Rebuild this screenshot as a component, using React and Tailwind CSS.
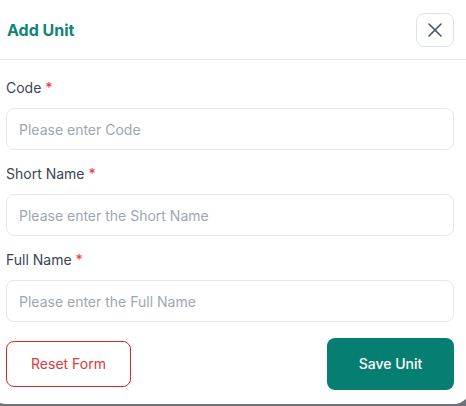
import React, { useState } from 'react';
import { X } from 'lucide-react';

const Field = ({ label, placeholder, value, onChange }) => (
  <div className="flex flex-col">
    <label className="mb-2.5 text-sm leading-5 text-[#3a4557]">
      {label} <span className="font-medium text-[#ef4444]">*</span>
    </label>
    <input
      value={value}
      onChange={onChange}
      placeholder={placeholder}
      className="h-[42px] w-full rounded-lg border border-[#e2e8f0] bg-white px-3 text-sm text-gray-800 placeholder:text-[#a0a6b1] outline-none"
    />
  </div>
);

const App = () => {
  const [form, setForm] = useState({ code: '', shortName: '', fullName: '' });

  const update = key => e => setForm(prev => ({ ...prev, [key]: e.target.value }));
  const reset = () => setForm({ code: '', shortName: '', fullName: '' });

  return (
    <div className="h-[406px] w-full overflow-hidden bg-[#6f727a] font-['Inter',sans-serif]">
      <div className="-ml-[10px] h-[404px] w-[480px] rounded-b-2xl bg-white">
        <div className="flex h-[60px] items-center justify-between border-b border-[#e5e7eb] pl-[17px] pr-4">
          <h2 className="text-base font-bold text-[#0e8577]">Add Unit</h2>
          <button className="flex h-[34px] w-[38px] items-center justify-center rounded-lg border border-[#dde3ee] text-[#4b5563]">
            <X size={24} strokeWidth={1.6} />
          </button>
        </div>

        <div className="px-4 pt-[18px]">
          <div className="flex flex-col gap-[14px]">
            <Field label="Code" placeholder="Please enter Code" value={form.code} onChange={update('code')} />
            <Field
              label="Short Name"
              placeholder="Please enter the Short Name"
              value={form.shortName}
              onChange={update('shortName')}
            />
            <Field
              label="Full Name"
              placeholder="Please enter the Full Name"
              value={form.fullName}
              onChange={update('fullName')}
            />
          </div>

          <div className="mt-4 flex h-[52px] items-center justify-between">
            <button
              onClick={reset}
              className="h-[46px] w-[125px] rounded-lg border border-[#dc2626] text-sm text-[#d93a3a]"
            >
              Reset Form
            </button>
            <button className="h-[52px] w-[127px] rounded-lg bg-[#067f72] text-sm font-medium text-white">
              Save Unit
            </button>
          </div>
        </div>
      </div>
    </div>
  );
};

export default App;
